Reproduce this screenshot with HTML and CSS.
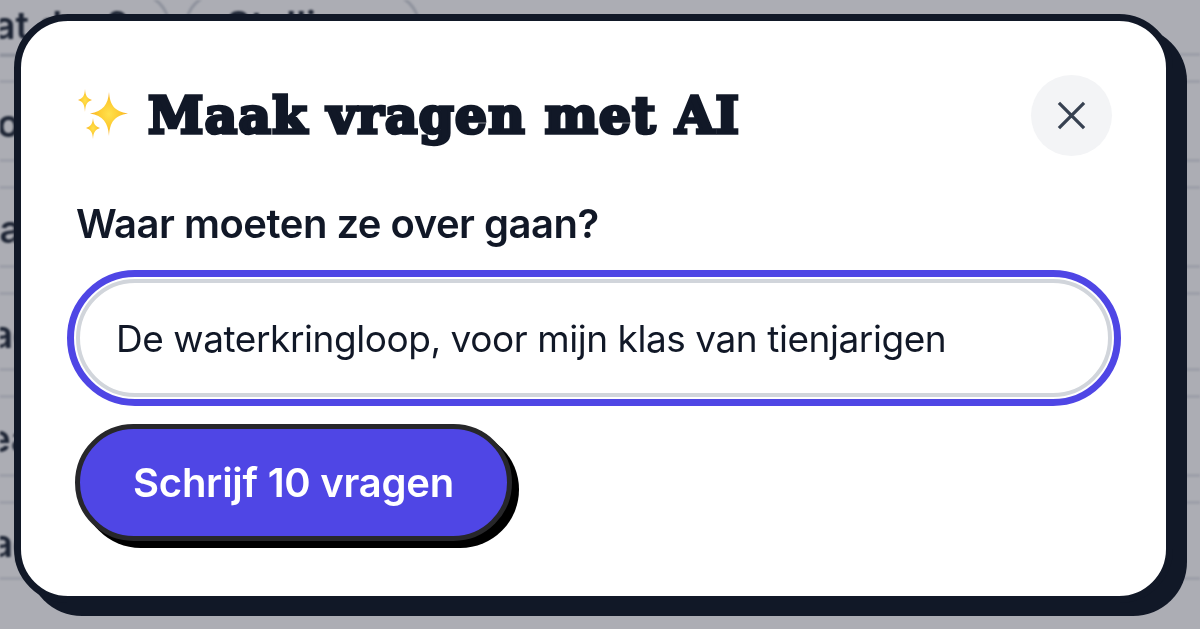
FILE: index.html
```html
<!DOCTYPE html>
<html lang="nl">
<head>
<meta charset="utf-8">
<title>Maak vragen met AI</title>
<link rel="stylesheet" href="styles.css">
</head>
<body>
<main class="page" aria-hidden="true">
  <div class="top-row">
    <span class="chip chip-a">Wat dan?</span>
    <span class="chip chip-b">Stelling</span>
  </div>
  <div class="row row-tall"><span class="row-text cut-vo">Hoe vo</span></div>
  <div class="row row-tall"><span class="row-text cut-ar">Waar</span></div>
  <div class="row row-short"><span class="row-text cut-a">Vraag</span></div>
  <div class="row row-tall"><span class="row-text cut-ea">Idea</span></div>
  <div class="row row-short"><span class="row-text cut-ag">Vraag</span></div>
</main>
<div class="overlay">
  <section class="dialog">
    <header class="dialog-head">
      <h1 class="dialog-title">
        <svg class="sparkles" viewBox="0 0 54 54" aria-hidden="true">
          <defs>
            <radialGradient id="spark" cx="50%" cy="50%" r="55%">
              <stop offset="0" stop-color="#ffe14d"/>
              <stop offset="0.55" stop-color="#fdc92f"/>
              <stop offset="1" stop-color="#f6a623"/>
            </radialGradient>
          </defs>
          <path fill="url(#spark)" d="M33 3 C34 16 38 22 52 24.500 C38 27 34 33 33 47 C32 33 27 27 14 24.500 C27 22 32 16 33 3Z"/>
          <path fill="url(#spark)" d="M9 0 C9.500 7 11 9 16 11 C11 13 9.500 15 9 23 C8.500 15 7 13 2 11 C7 9 8.500 7 9 0Z"/>
          <path fill="url(#spark)" d="M17 29 C17.500 35 19 37 24 39 C19 41 17.500 43 17 50 C16.500 43 15 41 10 39 C15 37 16.500 35 17 29Z"/>
        </svg>
        <span>Maak vragen met AI</span>
      </h1>
      <button class="close" type="button" aria-label="Sluiten">
        <svg viewBox="0 0 30 30" aria-hidden="true"><path d="M2 2 L28 28 M28 2 L2 28"/></svg>
      </button>
    </header>
    <label class="field-label" for="topic">Waar moeten ze over gaan?</label>
    <input class="field" id="topic" type="text" value="De waterkringloop, voor mijn klas van tienjarigen">
    <button class="submit" type="button">Schrijf 10 vragen</button>
  </section>
</div>
</body>
</html>
```
FILE: styles.css
```css
* { box-sizing: border-box; }

html, body {
  margin: 0;
  height: 100%;
  overflow: hidden;
  background: #fff;
  font-family: Inter, "Liberation Sans", sans-serif;
}

.page {
  height: 629px;
  overflow: hidden;
  filter: blur(0.9px);
  color: #1f2937;
}

.top-row {
  display: flex;
  gap: 15px;
  height: 63px;
  margin-top: -7px;
  border-bottom: 3px solid #e5e7eb;
}

.row {
  display: flex;
  align-items: center;
  margin-top: 24px;
  border-top: 3px solid #e5e7eb;
  border-bottom: 3px solid #e5e7eb;
}

.row-tall { height: 82px; }
.row-short { height: 79px; }

.row-text {
  padding-top: 4px;
  font-size: 38px;
  font-weight: 600;
  white-space: nowrap;
}

.cut-vo { margin-left: -108px; }
.cut-ar { margin-left: -59px; }
.cut-a { margin-left: -73px; }
.cut-ea { margin-left: -46px; }
.cut-ag { margin-left: -73px; }

.chip {
  flex: none;
  height: 64px;
  border: 3px solid #d1d5db;
  border-radius: 32px;
  font-size: 38px;
  font-weight: 600;
  line-height: 58px;
  white-space: nowrap;
}

.chip-a { width: 204px; margin-left: -34px; text-indent: -12px; }
.chip-b { width: 235px; padding-left: 38px; overflow: hidden; }

.overlay {
  position: fixed;
  inset: 0;
  padding: 14px 0 0 14px;
  background: rgba(24, 27, 48, 0.36);
}

.dialog {
  width: 1159px;
  height: 589px;
  padding: 54px 54px 55px 55px;
  display: flex;
  flex-direction: column;
  align-items: flex-start;
  background: #fff;
  border: 7px solid #111827;
  border-radius: 54px;
  box-shadow: 14px 13px 0 #111827;
}

.dialog-head {
  align-self: stretch;
  display: flex;
  align-items: center;
  justify-content: space-between;
  height: 81px;
}

.dialog-title {
  display: flex;
  align-items: center;
  gap: 18px;
  margin: 0;
  font-family: "DejaVu Serif", "Liberation Serif", serif;
  font-size: 50px;
  font-weight: 700;
  line-height: 1;
  letter-spacing: 1.35px;
  color: #111827;
  -webkit-text-stroke: 3.5px #111827;
}

.sparkles {
  width: 54px;
  height: 54px;
  flex: none;
}

.close {
  width: 81px;
  height: 81px;
  padding: 26px;
  border: 0;
  border-radius: 50%;
  background: #f3f4f6;
}

.close svg {
  display: block;
  width: 29px;
  height: 29px;
  fill: none;
  stroke: #374151;
  stroke-width: 3.4;
}

.field-label {
  margin-top: 41px;
  font-size: 40px;
  font-weight: 600;
  line-height: 54px;
  letter-spacing: -0.5px;
  color: #111827;
}

.field {
  align-self: stretch;
  width: 1036px;
  height: 118px;
  margin-top: 28px;
  padding: 0 36px;
  border: 4px solid #d1d5db;
  border-radius: 59px;
  outline: 7px solid #4f46e5;
  outline-offset: 2px;
  background: #fff;
  font: 400 37px Inter, "Liberation Sans", sans-serif;
  letter-spacing: -0.44px;
  color: #111827;
}

.submit {
  width: 437px;
  height: 117px;
  margin: 27px 0 0 -1px;
  border: 5px solid #27272a;
  border-radius: 59px;
  background: #4f46e5;
  box-shadow: 7px 7px 0 #000;
  font: 600 40px Inter, "Liberation Sans", sans-serif;
  letter-spacing: -0.25px;
  color: #fff;
}
```
